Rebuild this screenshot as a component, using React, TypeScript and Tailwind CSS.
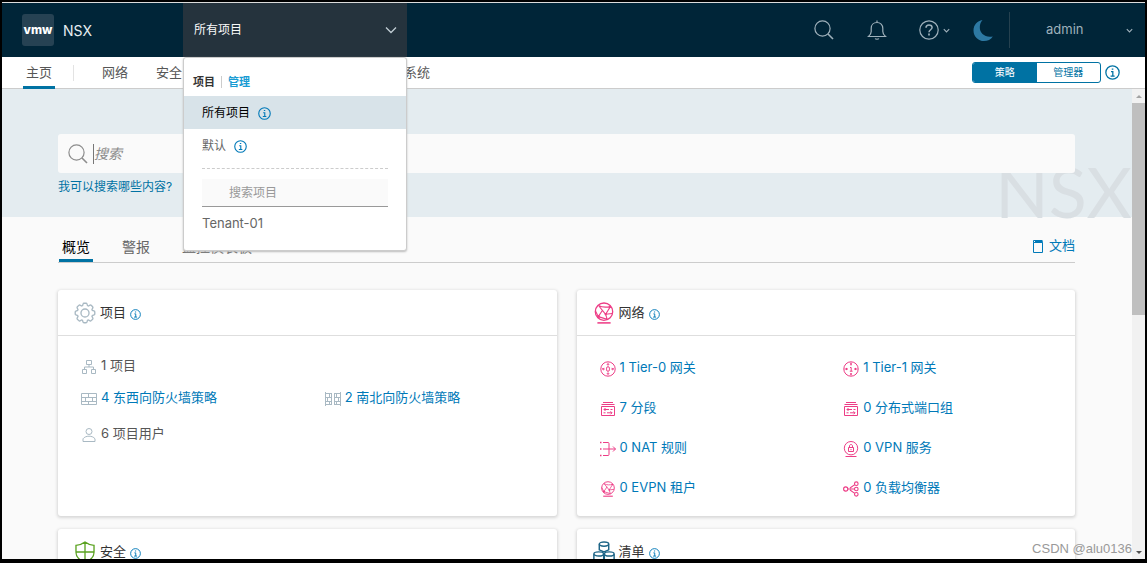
import React, { useState } from "react";
import clsx from "clsx";

type IconProps = { className?: string };

function Svg({ className, box = 24, width = 1.5, children }: IconProps & { box?: number; width?: number; children: React.ReactNode }) {
  return (
    <svg
      className={clsx("shrink-0", className)}
      viewBox={`0 0 ${box} ${box}`}
      fill="none"
      stroke="currentColor"
      strokeWidth={width}
      aria-hidden="true"
    >
      {children}
    </svg>
  );
}

const SearchIcon = ({ className }: IconProps) => (
  <Svg className={className} box={20} width={1.2}>
    <circle cx="8.5" cy="8.5" r="7.6" />
    <path d="M14 14l5 5" strokeWidth="1.6" />
  </Svg>
);

const BellIcon = ({ className }: IconProps) => (
  <Svg className={className} box={20} width={1.2}>
    <path d="M10 .5v1.7M1.5 16.5h17c-1.9-1.6-2.7-3-2.7-5V8.200C15.8 4.9 13.4 2.5 10 2.5S4.200 4.9 4.200 8.200v3.300c0 2-.8 3.400-2.700 5z" />
    <path d="M8.2 18.500c.5 1 3.100 1 3.600 0" />
  </Svg>
);

const HelpIcon = ({ className }: IconProps) => (
  <Svg className={className} box={20} width={1.2}>
    <circle cx="10" cy="10" r="9.2" />
    <path d="M7 7.8C7 6 8.2 5 10 5s3.1 1.100 3.100 2.600c0 2-3.100 2.300-3.100 4.600" strokeWidth="1.5" />
    <path d="M10 13.6v1.8" strokeWidth="1.7" />
  </Svg>
);

const MoonIcon = ({ className }: IconProps) => (
  <svg className={className} viewBox="0 0 20 20" fill="currentColor" aria-hidden="true">
    <path d="M9.5 0C4.2.8.5 5 .5 10.400.5 16.400 5.200 21 11 21c3.600 0 7-1.700 8.800-4.600C12.500 18 6.500 13.500 6.800 7 6.900 4.200 7.900 1.800 9.500 0z" />
  </svg>
);

const Chevron = ({ className }: IconProps) => (
  <Svg className={className} box={12} width={1.3}>
    <path d="M1 3.5l5 5 5-5" />
  </Svg>
);

const SmallChevron = ({ className }: IconProps) => (
  <Svg className={className} box={7} width={1.1}>
    <path d="M.8 2.200l2.700 2.700 2.700-2.700" />
  </Svg>
);

const InfoIcon = ({ className }: IconProps) => (
  <Svg className={className} box={14} width={1.2}>
    <circle cx="7" cy="7" r="6.2" />
    <path d="M5.6 6.200h1.700v4M5.200 10.300h3.800M6.300 3.800h1.500" />
  </Svg>
);

const GearIcon = ({ className }: IconProps) => (
  <Svg className={className} box={36} width={2.2}>
    <circle cx="18" cy="18" r="6.6" />
    <path d="M32.8 14.700L30 13.800l-.6-1.500 1.400-2.600c.3-.6.2-1.400-.3-1.900l-2.400-2.400c-.5-.5-1.300-.6-1.900-.3l-2.600 1.400-1.500-.6-.9-2.800C21 2.500 20.400 2 19.700 2h-3.400c-.7 0-1.300.5-1.400 1.200L14 6c-.6.1-1.100.3-1.600.6L9.800 5.200C9.200 4.900 8.400 5 7.900 5.500L5.500 7.900C5 8.400 4.900 9.200 5.200 9.800l1.300 2.500c-.2.5-.4 1.100-.6 1.600l-2.800.9C2.500 15 2 15.600 2 16.300v3.400c0 .7.5 1.300 1.200 1.500l2.800.9.6 1.500-1.400 2.600c-.3.6-.2 1.400.3 1.900l2.400 2.400c.5.5 1.300.6 1.900.3l2.600-1.400 1.500.6.9 2.900c.2.6.8 1.100 1.500 1.100h3.400c.7 0 1.300-.5 1.500-1.100l.9-2.900 1.500-.6 2.600 1.400c.6.3 1.400.2 1.900-.3l2.400-2.400c.5-.5.6-1.300.3-1.900l-1.400-2.600.6-1.500 2.900-.9c.6-.2 1.100-.8 1.100-1.500v-3.400c0-.7-.5-1.400-1.200-1.600z" />
  </Svg>
);

const OrgIcon = ({ className }: IconProps) => (
  <Svg className={className} box={16} width={1}>
    <path d="M5.5 1.500h5v4h-5zM1.500 10.500h4v4h-4zM10.500 10.500h4v4h-4zM8 5.500v2.500M3.500 10.500V8h9v2.500" />
  </Svg>
);

const WallIcon = ({ className }: IconProps) => (
  <Svg className={className} box={16} width={1}>
    <path d="M.5 2.500h15v11H.5zM.5 6.500h15M.5 10.500h15M7.500 2.500v4M4.500 6.500v4M11.500 6.500v4M7.500 10.500v3" />
  </Svg>
);

const GateWallIcon = ({ className }: IconProps) => (
  <Svg className={className} box={16} width={1}>
    <path d="M.5 1v14M6.500 2v12M9.500 2v12M15.500 1v14M.5 2.500h6M9.500 2.500h6M.5 6.500h6M9.500 6.500h6M.5 10.500h6M9.500 10.500h6M.5 13.500h6M9.500 13.500h6M4.500 2.500v4M2.500 6.500v4M4.500 10.500v3M11.500 2.500v4M13.500 6.500v4M11.500 10.500v3" />
  </Svg>
);

const UserIcon = ({ className }: IconProps) => (
  <Svg className={className} box={16} width={1}>
    <circle cx="8" cy="4.5" r="3" />
    <path d="M2 14.500h12v-2.700C12.600 10 10.500 9.200 8 9.200S3.400 10 2 11.800z" />
  </Svg>
);

const GlobeIcon = ({ className }: IconProps) => (
  <Svg className={className} box={20} width={1.2}>
    <circle cx="10" cy="8.8" r="7.9" />
    <path d="M5 3.200l6.500 8M11.500 11.200l4.300-7M11.500 11.200l6-.8M11.500 11.200l1.500 4.800M5 3.200c4 2.200 7 1.800 10.800 1M4.800 13.300l4-6M4.800 13.300l8.200 2.500M2.300 8.200l2.500 5.100" strokeWidth="1" />
    <path d="M4 19h12" strokeWidth="1.4" />
    <circle cx="11.500" cy="11.200" r="1" fill="currentColor" stroke="none" />
    <circle cx="5" cy="13.300" r="1.300" fill="currentColor" stroke="none" />
    <circle cx="15.500" cy="4.500" r="1" fill="currentColor" stroke="none" />
  </Svg>
);

const Tier0Icon = ({ className }: IconProps) => (
  <Svg className={className} box={16} width={1}>
    <circle cx="8" cy="8" r="7.2" />
    <rect x="6.600" y="5.700" width="2.800" height="4.600" rx="1.400" />
    <path d="M8 1.800v2.200M6.900 3.200L8 4.300l1.100-1.100M8 14.200V12M6.900 12.800L8 11.700l1.100 1.100M2 8h2.700M3.800 6.900L2.700 8l1.100 1.100M14 8h-2.700M12.200 6.900L13.300 8l-1.100 1.100" />
  </Svg>
);

const Tier1Icon = ({ className }: IconProps) => (
  <Svg className={className} box={16} width={1}>
    <circle cx="8" cy="8" r="7.2" />
    <path d="M7 6.500h1.200v3.700M6.800 10.200h2.800M8 1.500v3M7 3h2M8 14.500v-2.500M7 13h2M1.500 8h3.500M3.500 6.900v2.200M14.500 8H11M12.500 6.900v2.200" />
  </Svg>
);

const SegmentIcon = ({ className }: IconProps) => (
  <Svg className={className} box={16} width={1}>
    <path d="M3 1.500h10M1.500 3.500h13" strokeWidth="1.2" />
    <path d="M1.500 5.500h13v9h-13zM4 8.500h5M5.500 7L4 8.500 5.500 10M10.500 8.500h2M12 11.800H7M10.500 10.300l1.500 1.500-1.500 1.500M5.500 11.800h-2" />
  </Svg>
);

const NatIcon = ({ className }: IconProps) => (
  <Svg className={className} box={16} width={1}>
    <path d="M3 1.500h5q1 0 1 1v11q0 1-1 1H3M3 8h12.500M13 5.500L15.500 8 13 10.500" />
    <path d="M0 1.500h1.500M0 8h1.500M0 14.500h1.500" strokeWidth="1.5" />
  </Svg>
);

const VpnIcon = ({ className }: IconProps) => (
  <Svg className={className} box={16} width={1}>
    <circle cx="8" cy="7.2" r="6.7" />
    <path d="M5.500 6.500h5v4h-5zM6.500 6.500V5c0-2 3-2 3 0v1.500M8 8v1.200M2.500 15.500h11" />
  </Svg>
);

const BalancerIcon = ({ className }: IconProps) => (
  <Svg className={className} box={16} width={1.1}>
    <circle cx="2.700" cy="8" r="2.100" />
    <circle cx="13.300" cy="2.700" r="1.800" />
    <circle cx="13.300" cy="8" r="1.800" />
    <circle cx="13.300" cy="13.300" r="1.800" />
    <path d="M5 8h6.500M7 7l4.800-3.400M7 9l4.800 3.400" />
  </Svg>
);

const ShieldIcon = ({ className }: IconProps) => (
  <Svg className={className} box={20} width={1.2}>
    <path d="M10 1C7.500 3 4.800 3.800 1.800 3.900v6.300C1.800 14.500 5 17.500 10 19.500c5-2 8.200-5 8.200-9.300V3.900C15.200 3.800 12.500 3 10 1zM10 1v18.500M1.800 10h16.400" />
  </Svg>
);

const InventoryIcon = ({ className }: IconProps) => (
  <Svg className={className} box={20} width={1.3}>
    <path d="M5.700 3v5L10 10l4.300-2V3M.8 12v5l4.400 2 4.500-2v-5M10.300 12v5l4.500 2 4.400-2v-5" />
    <ellipse cx="10" cy="2.800" rx="4.300" ry="1.900" />
    <ellipse cx="5.200" cy="11.800" rx="4.400" ry="1.900" />
    <ellipse cx="14.800" cy="11.800" rx="4.400" ry="1.900" />
  </Svg>
);

const DocIcon = ({ className }: IconProps) => (
  <Svg className={className} box={14} width={1}>
    <path d="M2.500 3.500h9v10h-9zM2.500 3.500v-2h9M4 2.500h7.500v1" />
  </Svg>
);

type Stat = {
  icon: React.ComponentType<IconProps>;
  label: string;
  plain?: boolean;
};

const projectRows: { height: string; stats: Stat[] }[] = [
  { height: "h-9", stats: [{ icon: OrgIcon, label: "1 项目", plain: true }] },
  {
    height: "h-7",
    stats: [
      { icon: WallIcon, label: "4 东西向防火墙策略" },
      { icon: GateWallIcon, label: "2 南北向防火墙策略" },
    ],
  },
  { height: "h-11", stats: [{ icon: UserIcon, label: "6 项目用户", plain: true }] },
];

const networkRows: { height: string; stats: Stat[] }[] = [
  { height: "h-10", stats: [{ icon: Tier0Icon, label: "1 Tier-0 网关" }, { icon: Tier1Icon, label: "1 Tier-1 网关" }] },
  { height: "h-10", stats: [{ icon: SegmentIcon, label: "7 分段" }, { icon: SegmentIcon, label: "0 分布式端口组" }] },
  { height: "h-10", stats: [{ icon: NatIcon, label: "0 NAT 规则" }, { icon: VpnIcon, label: "0 VPN 服务" }] },
  { height: "h-10", stats: [{ icon: GlobeIcon, label: "0 EVPN 租户" }, { icon: BalancerIcon, label: "0 负载均衡器" }] },
];

type CardProps = {
  title: string;
  icon: React.ReactNode;
  rows?: { height: string; stats: Stat[] }[];
  tint?: string;
};

function Card({ title, icon, rows = [], tint }: CardProps) {
  return (
    <section className="rounded-[3px] bg-white shadow-[0_1px_3px_1px_#d8d8d8]">
      <header className="flex h-[46px] items-center border-b border-[#dedede] pl-4">
        {icon}
        <h2 className="ml-1 text-[13px] text-[#333]">{title}</h2>
        <button type="button" aria-label={`${title}信息`} className="mt-1 ml-1 text-[#0079b8]">
          <InfoIcon className="size-[11px]" />
        </button>
      </header>
      <div className="pt-3 pb-2">
        {rows.map((row) => (
          <div key={row.stats[0].label} className={clsx("grid grid-cols-2 items-center gap-x-3 pl-[23px]", row.height)}>
            {row.stats.map(({ icon: Icon, label, plain }) => (
              <div key={label} className="flex items-center gap-1">
                <Icon className={clsx("mt-0.5 size-4", tint)} />
                {plain ? (
                  <span className="text-[13px] text-[#565656]">{label}</span>
                ) : (
                  <a href="#" className="text-[13px] text-[#0079b8]">{label}</a>
                )}
              </div>
            ))}
          </div>
        ))}
      </div>
    </section>
  );
}

function ProjectMenu() {
  const [query, setQuery] = useState("");

  return (
    <div className="absolute top-full left-0 z-20 h-[194px] w-full rounded-[3px] border border-[#ccc] bg-white text-[12px] shadow-[0_1px_2px_#bbb]">
      <div className="flex h-[38px] items-end pb-1 pl-[9px] text-[11px] leading-5 font-bold">
        <span className="text-[#333]">项目</span>
        <span className="mx-[6px] mb-1 h-3 w-px bg-[#ccc]" />
        <a href="#" className="text-[#179bd3]">管理</a>
      </div>
      <button type="button" className="flex h-[33px] w-full items-center gap-2 bg-[#d8e3e9] pl-[18px] text-black">
        所有项目
        <InfoIcon className="mt-0.5 size-[13px] text-[#0079b8]" />
      </button>
      <button type="button" className="flex h-[33px] w-full items-center gap-2 pl-[18px] text-[#666]">
        默认
        <InfoIcon className="mt-0.5 size-[13px] text-[#0079b8]" />
      </button>
      <div className="mx-[18px] mt-[6px] border-t border-dashed border-[#ccc]" />
      <input
        type="text"
        aria-label="搜索项目"
        placeholder="搜索项目"
        value={query}
        onChange={(e) => setQuery(e.target.value)}
        className="mx-[18px] mt-[10px] block h-7 w-[calc(100%-36px)] border-b border-[#999] bg-[#fafafa] pl-[27px] outline-none placeholder:text-[#999]"
      />
      <button type="button" className="mt-[6px] block pl-[18px] text-[13px] leading-5 text-[#666]">Tenant-01</button>
    </div>
  );
}

function Header() {
  return (
    <header className="flex h-[55px] shrink-0 border-t border-[#dcdcdc] bg-[#002538]">
      <div className="flex w-[181px] items-center gap-[9px] pl-5">
        <span className="flex size-8 items-center justify-center rounded-[3px] bg-[#264253] text-[12px] font-extrabold text-white">vmw</span>
        <span className="text-[14px] text-[#e6edf0]">NSX</span>
      </div>
      <div className="relative w-[224px] bg-[#25333d]">
        <button
          type="button"
          aria-expanded="true"
          className="flex h-full w-full items-center justify-between pr-[10px] pl-[11px] text-[12px] text-[#fafafa]"
        >
          所有项目
          <Chevron className="size-3 text-[#c1cdd4]" />
        </button>
        <ProjectMenu />
      </div>
      <div className="ml-auto flex text-[#9fb1bb]">
        <button type="button" aria-label="搜索" className="flex w-[53px] items-center justify-center">
          <SearchIcon className="size-5" />
        </button>
        <button type="button" aria-label="通知" className="flex w-[53px] items-center justify-center">
          <BellIcon className="size-5" />
        </button>
        <button type="button" aria-label="帮助" className="flex w-[53px] items-center gap-1 pl-4">
          <HelpIcon className="size-5" />
          <SmallChevron className="size-[7px]" />
        </button>
        <button type="button" aria-label="深色模式" className="flex w-[53px] items-center justify-center text-[#2d79a3]">
          <MoonIcon className="size-5 overflow-visible" />
        </button>
        <button type="button" className="flex w-[136px] items-center justify-between">
          <span className="flex h-9 items-center border-l border-[#25414f] pl-9 text-[13px]">admin</span>
          <SmallChevron className="mr-3 size-[7px]" />
        </button>
      </div>
    </header>
  );
}

function NavBar() {
  return (
    <nav className="flex h-8 shrink-0 border-b border-[#ccc] bg-white pl-[21px] text-[13px] text-[#565656]">
      <a href="#" className="-mb-px flex items-center border-b-[3px] border-[#0072a3] px-[3px] pt-0.5">主页</a>
      <span className="mr-7 ml-[18px] h-4 w-px self-center bg-[#e3e3e3]" />
      <div className="flex items-center gap-7">
        <a href="#">网络</a>
        <a href="#">安全</a>
        <a href="#" className="ml-[194px]">系统</a>
      </div>
      <div className="ml-auto flex items-center pr-[25px] text-[10px] text-[#0072a3]">
        <div className="mr-1 flex h-[21px] w-[129px] overflow-hidden rounded-[3px] border border-[#0072a3]">
          <button type="button" className="w-1/2 bg-[#0072a3] text-white">策略</button>
          <button type="button" className="w-1/2">管理器</button>
        </div>
        <button type="button" aria-label="模式信息">
          <InfoIcon className="size-[15px]" />
        </button>
      </div>
    </nav>
  );
}

function Hero() {
  const [text, setText] = useState("");

  return (
    <div className="relative h-32 bg-[#e4ecf0] pt-[45px] pr-[57px] pl-14">
      <span className="absolute right-0 bottom-0 font-['Lato',sans-serif] text-[70px] leading-[52px] text-[#d9dfe3]">NSX</span>
      <div className="relative flex h-[39px] items-center rounded-[3px] bg-[#fafafa] pl-[10px]">
        <SearchIcon className="size-5 text-[#8c8c8c]" />
        <span className="ml-[5px] h-5 w-px bg-[#777]" />
        <input
          type="text"
          aria-label="搜索"
          placeholder="搜索"
          value={text}
          onChange={(e) => setText(e.target.value)}
          className="min-w-0 flex-1 bg-transparent text-[14px] outline-none placeholder:text-[#8c8c8c] placeholder:italic"
        />
      </div>
      <a href="#" className="relative inline-block text-[12px] leading-7 text-[#0072a3]">我可以搜索哪些内容?</a>
    </div>
  );
}

export default function App() {
  return (
    <div className="relative flex h-screen flex-col overflow-hidden border-2 border-b-4 border-black bg-[#fafafa] font-[Inter,'Noto_Sans_CJK_SC',sans-serif]">
      <Header />
      <NavBar />
      <div className="flex min-h-0 flex-1">
        <main className="min-w-0 flex-1 overflow-hidden">
          <Hero />
          <div className="pr-[57px] pl-14">
            <div className="flex h-[46px] items-end border-b border-[#ccc] text-[14px] leading-6 text-[#666]">
              <a href="#" className="ml-px border-b-[3px] border-[#0072a3] px-[3px] text-black">概览</a>
              <a href="#" className="ml-[29px] border-b-[3px] border-transparent">警报</a>
              <a href="#" className="ml-8 border-b-[3px] border-transparent">监控仪表板</a>
              <a href="#" className="ml-auto flex items-center gap-1 border-b-[5px] border-transparent text-[13px] text-[#0079b8]">
                <DocIcon className="mt-0.5 size-[14px]" />
                文档
              </a>
            </div>
            <div className="mt-[27px] grid grid-cols-2 gap-x-5 gap-y-[13px]">
              <Card title="项目" icon={<GearIcon className="size-[22px] text-[#a9b9c3]" />} rows={projectRows} tint="text-[#a9b9c3]" />
              <Card title="网络" icon={<GlobeIcon className="size-[22px] text-[#ed3d86]" />} rows={networkRows} tint="text-[#ed3d86]" />
              <Card title="安全" icon={<ShieldIcon className="size-[22px] text-[#5aa220]" />} />
              <Card title="清单" icon={<InventoryIcon className="size-[22px] text-[#1d6587]" />} />
            </div>
          </div>
        </main>
        <div className="flex w-[13px] shrink-0 flex-col items-center bg-[#f1f1f1]" aria-hidden="true">
          <span className="mt-[6px] border-x-[3px] border-b-[3px] border-x-transparent border-b-[#a3a3a3]" />
          <span className="mt-[5px] h-[45%] w-full bg-[#bfbfbf]" />
          <span className="mt-auto mb-[5px] border-x-[3px] border-t-[3px] border-x-transparent border-t-[#505050]" />
        </div>
      </div>
      <span className="absolute right-[13px] bottom-0 font-['Liberation_Sans'] text-[13px] leading-5 text-[#999]">CSDN @alu0136</span>
    </div>
  );
}
